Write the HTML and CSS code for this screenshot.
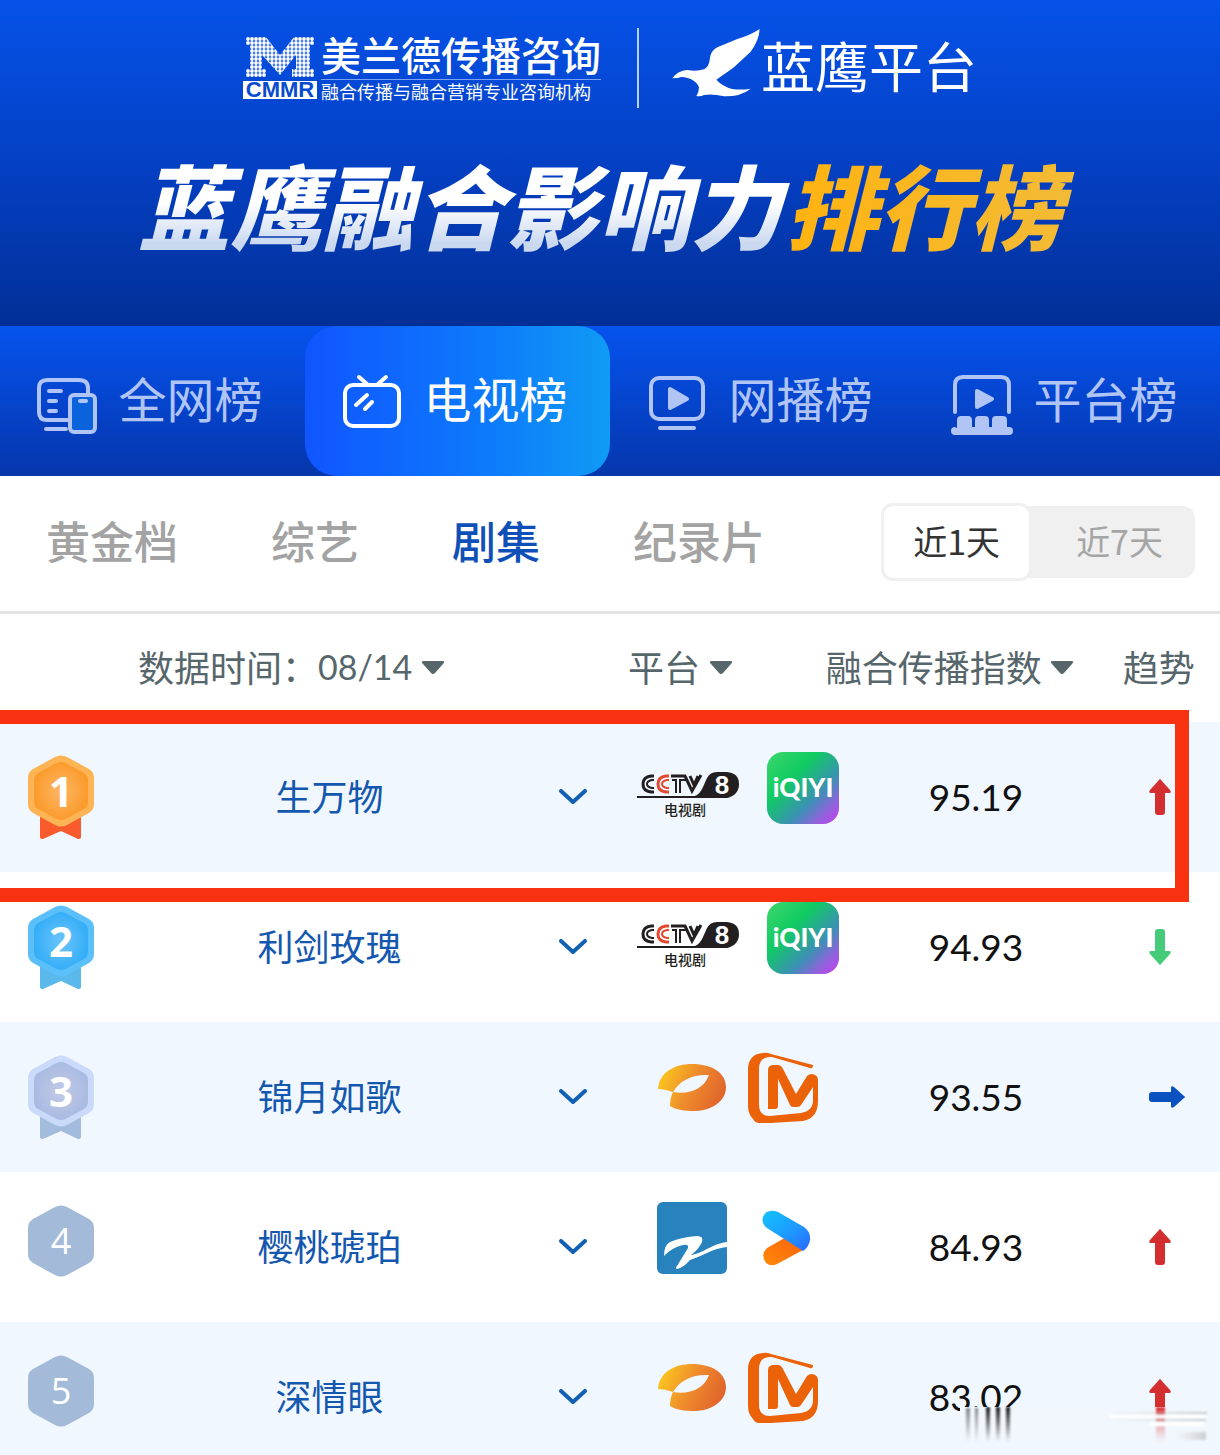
FILE: index.html
```html
<!DOCTYPE html>
<html lang="zh-CN">
<head>
    <meta charset="UTF-8">
    <meta name="viewport" content="width=device-width, initial-scale=1.0">
    <title>蓝鹰融合影响力排行榜</title>
    <link rel="stylesheet" href="styles.css">
</head>
<body>

    <!-- Shared icons -->
    <svg class="sprite" aria-hidden="true">
        <defs>
            <linearGradient id="iqiyiFill" x1="0" y1="0" x2="1" y2="1">
                <stop offset="0" stop-color="#3fd76c"/>
                <stop offset=".35" stop-color="#0fcb62"/>
                <stop offset=".65" stop-color="#3b91b4"/>
                <stop offset=".85" stop-color="#9a5ce0"/>
                <stop offset="1" stop-color="#c23ff2"/>
            </linearGradient>
            <linearGradient id="fishFill" x1="0" y1=".3" x2="1" y2=".6">
                <stop offset="0" stop-color="#fcc81e"/>
                <stop offset=".5" stop-color="#ee8b2d"/>
                <stop offset="1" stop-color="#e0632b"/>
            </linearGradient>
            <linearGradient id="youkuBlue" x1="0" y1="0" x2="1" y2="1">
                <stop offset="0" stop-color="#12c4fb"/>
                <stop offset=".6" stop-color="#1f95ff"/>
                <stop offset="1" stop-color="#2a66ff"/>
            </linearGradient>
            <linearGradient id="youkuOrange" x1="0" y1="1" x2="1" y2="0">
                <stop offset="0" stop-color="#ff8a0a"/>
                <stop offset="1" stop-color="#fa5f0c"/>
            </linearGradient>
            <radialGradient id="goldFill">
                <stop offset="0" stop-color="#fcb765"/>
                <stop offset="1" stop-color="#fb9b2c"/>
            </radialGradient>
            <radialGradient id="blueFill">
                <stop offset="0" stop-color="#6cc4fb"/>
                <stop offset="1" stop-color="#35aef8"/>
            </radialGradient>
            <radialGradient id="greyFill">
                <stop offset="0" stop-color="#c3c9e6"/>
                <stop offset="1" stop-color="#a9bbe2"/>
            </radialGradient>
            <pattern id="dots" width="4" height="4" patternUnits="userSpaceOnUse">
                <circle cx="2" cy="2" r="1.9" fill="#fff"/>
            </pattern>
        </defs>

        <symbol id="hex" viewBox="0 0 66 72">
            <path d="M27 2Q33-1 39 2L61 14Q66 17 66 23V49Q66 55 61 58L39 70Q33 73 27 70L5 58Q0 55 0 49V23Q0 17 5 14Z"/>
        </symbol>
        <symbol id="ribbon" viewBox="0 0 66 84">
            <path d="M12 54H53V82Q53 84 50 84L33 76 15 84Q12 84 12 82Z"/>
        </symbol>
        <symbol id="chevron" viewBox="0 0 28 16">
            <path d="M2 2L14 13 26 2" fill="none" stroke="#1060b4" stroke-width="4" stroke-linecap="round" stroke-linejoin="round"/>
        </symbol>
        <symbol id="caret" viewBox="0 0 24 14">
            <path d="M3 0H21Q25 0 22 3L14 12Q12 14 10 12L2 3Q-1 0 3 0Z" fill="#56666b"/>
        </symbol>
        <symbol id="arrow" viewBox="0 0 22 36">
            <path d="M10 1Q11-1 12 1L21 11Q23 14 20 14H16V33Q16 36 13 36H9Q6 36 6 33V14H2Q-1 14 1 11Z"/>
        </symbol>

        <symbol id="cctv" viewBox="0 0 110 72">
            <g fill="none" stroke="#231f20" stroke-width="2">
                <path d="M17 24H14Q6 25 6 32T14 40H17" stroke-width="3"/>
                <path d="M17 28H15Q10 29 10 32T15 36H17"/>
                <path d="M34 24H49" stroke-width="3"/>
                <path d="M35 28H39V41M43 41V28H49"/>
                <path d="M48 24L55 39 64 23M53 24L57 33 61 24" stroke-width="3"/>
            </g>
            <g fill="none" stroke="#e2492f" stroke-width="2">
                <path d="M32 24H29Q21 25 21 32T29 40H32" stroke-width="3"/>
                <path d="M32 28H30Q25 29 25 32T30 36H32"/>
            </g>
            <path d="M0 44H58Q63 42 66 35L70 26Q73 20 80 20H90Q102 21 102 32T90 46H0Z" fill="#231f20"/>
        </symbol>
        <symbol id="hunan" viewBox="0 0 70 72">
            <path fill="url(#fishFill)" fill-rule="evenodd" d="M1 37C2 20 18 12 35 12C55 12 69 21 69 35C69 49 55 59 37 59C28 59 19 58 13 54Q13 46 16 40Q8 37 1 37ZM16 40C32 43 47 37 52 23C36 22 23 28 16 40Z"/>
        </symbol>
        <symbol id="mango" viewBox="0 0 72 72">
            <path fill="#ec6209" d="M66 13Q66 17 63 16L25 5Q13 4 12 16V53Q12 64 23 64L54 61Q66 59 66 48V35L54 53Q53 55 50 55H46Q44 55 43 53L31 27V54Q31 57 28 57H21V18Q21 13 27 13H31Q34 13 36 17L49 42 60 24Q62 22 65 22Q71 23 71 28V49Q71 66 56 69L24 71H12Q8 71 6 67Q1 62 1 54V16Q2 2 16 1Q19 0 24 2Z"/>
        </symbol>
        <symbol id="zhejiang" viewBox="0 0 70 72">
            <rect width="70" height="72" rx="6" fill="#2782be"/>
            <path fill="#fff" d="M7 54Q7 43 13 40Q25 35 40 34Q47 34 45 40Q42 47 34 53Q41 52 50 47Q61 41 70 40V45Q60 46 50 51Q39 56 33 58Q26 66 20 67Q18 66 20 64L31 46Q32 42 26 43Q14 46 7 54Z"/>
        </symbol>
        <symbol id="youku" viewBox="0 0 72 72">
            <path fill="url(#youkuOrange)" d="M20 46L43 33 56 48 30 62Q24 65 19 61Q13 53 20 46Z"/>
            <path fill="url(#youkuBlue)" d="M31 10L57 25Q64 30 63 38Q62 45 56 49L20 26Q14 21 16 15Q20 6 31 10Z"/>
        </symbol>
    </svg>

    <div class="page">
        <header class="banner">
            <div class="logos">
                <div class="cmmr">
                    <div class="cmmr-mark">
                        <svg width="68" height="40" viewBox="0 0 68 40" aria-hidden="true">
                            <path fill="url(#dots)" d="M0 0H20L34 18 48 0H68V8H64V32H68V40H46V32H50V18L34 38 16 18V32H20V40H0V32H4V8H0Z"/>
                        </svg>
                        <span>CMMR</span>
                    </div>
                    <div class="cmmr-text">
                        <strong>美兰德传播咨询</strong>
                        <small>融合传播与融合营销专业咨询机构</small>
                    </div>
                </div>
                <div class="eagle">
                    <svg width="90" height="70" viewBox="146 38 270 208" aria-hidden="true">
                        <path fill="#fff" d="M150 188Q165 165 195 163Q222 168 245 161Q260 152 262 132Q264 105 285 95L345 70Q385 58 412 40Q410 75 385 108L335 155Q300 180 282 192Q300 212 330 220Q355 224 385 219Q355 243 305 242Q270 234 245 238Q235 243 222 241Q230 230 230 215Q225 200 205 190Q178 180 168 187Q158 187 150 188Z"/>
                    </svg>
                    <span>蓝鹰平台</span>
                </div>
            </div>
            <h1><span class="white">蓝鹰融合影响力</span><span class="gold">排行榜</span></h1>
        </header>

        <nav class="main-tabs">
            <a href="#all">
                <svg width="62" height="62" viewBox="0 0 62 62" fill="none" stroke="currentColor" stroke-width="4" stroke-linecap="round">
                    <path d="M32 46H11Q3 46 3 38V14Q3 6 11 6H43Q52 6 52 14V20M13 17H25M13 27H20M13 37H20M10 55H30"/>
                    <rect x="34" y="21" width="25" height="37" rx="4" fill="#0a62dd"/>
                    <path d="M44 27H50"/>
                </svg>
                全网榜
            </a>
            <a href="#tv" class="active">
                <svg width="62" height="62" viewBox="0 0 62 62" fill="none" stroke="currentColor" stroke-width="4" stroke-linecap="round">
                    <rect x="4" y="11" width="54" height="41" rx="8"/>
                    <path d="M18 3L26 10M45 3L37 10M26 21L15 31M31 28L24 35"/>
                </svg>
                电视榜
            </a>
            <a href="#web">
                <svg width="62" height="62" viewBox="0 0 62 62" fill="none" stroke="currentColor" stroke-width="4" stroke-linecap="round">
                    <rect x="5" y="4" width="52" height="41" rx="8"/>
                    <path d="M24 15V34L41 25Z" fill="currentColor" stroke-linejoin="round"/>
                    <path d="M14 54H48"/>
                </svg>
                网播榜
            </a>
            <a href="#platform">
                <svg width="62" height="62" viewBox="0 0 62 62" fill="none" stroke="currentColor" stroke-width="4" stroke-linecap="round">
                    <path d="M4 38V11Q4 3 12 3H50Q58 3 58 11V38"/>
                    <path d="M26 17V33L41 25Z" fill="currentColor" stroke-linejoin="round"/>
                    <path fill="currentColor" stroke="none" d="M6 54V46Q6 42 10 42H17Q21 42 21 46V53H24V46Q24 42 28 42H34Q38 42 38 46V53H41V46Q41 42 45 42H52Q56 42 56 46V53H58Q62 53 62 57T58 61H4Q0 61 0 57T4 53Z"/>
                </svg>
                平台榜
            </a>
        </nav>

        <div class="sub-tabs">
            <nav>
                <a href="#prime">黄金档</a>
                <a href="#variety">综艺</a>
                <a href="#drama" class="active">剧集</a>
                <a href="#documentary">纪录片</a>
            </nav>
            <div class="range">
                <button type="button" class="active">近1天</button>
                <button type="button">近7天</button>
            </div>
        </div>

        <div class="ranking">
            <table>
                <colgroup>
                    <col class="col-rank">
                    <col class="col-name">
                    <col class="col-more">
                    <col class="col-platform">
                    <col class="col-index">
                    <col class="col-trend">
                </colgroup>
                <thead>
                    <tr>
                        <th colspan="3" class="head-date">
                            <div class="filter">
                                <label for="date">数据时间：</label>
                                <select id="date"><option>08/14</option></select>
                                <svg width="24" height="14"><use href="#caret"/></svg>
                            </div>
                        </th>
                        <th class="head-platform">
                            <div class="filter">
                                <select id="platform" aria-label="平台"><option>平台</option></select>
                                <svg width="24" height="14"><use href="#caret"/></svg>
                            </div>
                        </th>
                        <th class="head-index">
                            <div class="filter">
                                <button type="button">融合传播指数<svg width="24" height="14"><use href="#caret"/></svg></button>
                            </div>
                        </th>
                        <th class="head-trend">趋势</th>
                    </tr>
                </thead>
                <tbody>
                    <tr>
                        <td>
                            <div class="medal gold-medal">
                                <svg class="tail"><use href="#ribbon"/></svg>
                                <svg class="edge"><use href="#hex"/></svg>
                                <svg class="face" fill="url(#goldFill)"><use href="#hex"/></svg>
                                <span>1</span>
                            </div>
                        </td>
                        <td class="name">生万物</td>
                        <td><button type="button" class="more" aria-label="展开"><svg width="28" height="16"><use href="#chevron"/></svg></button></td>
                        <td>
                            <div class="platforms">
                                <svg width="110" height="72" viewBox="0 0 110 72">
                                    <use href="#cctv"/>
                                    <text x="85" y="42" class="cctv-number">8</text>
                                    <text x="48" y="63" class="cctv-name">电视剧</text>
                                </svg>
                                <svg width="72" height="72" viewBox="0 0 72 72">
                                    <rect width="72" height="72" rx="16" fill="url(#iqiyiFill)"/>
                                    <text x="36" y="45" class="iqiyi-name">iQIYI</text>
                                </svg>
                            </div>
                        </td>
                        <td class="index">95.19</td>
                        <td class="trend"><svg width="22" height="36" class="up"><use href="#arrow"/></svg></td>
                    </tr>
                    <tr>
                        <td>
                            <div class="medal blue-medal">
                                <svg class="tail"><use href="#ribbon"/></svg>
                                <svg class="edge"><use href="#hex"/></svg>
                                <svg class="face" fill="url(#blueFill)"><use href="#hex"/></svg>
                                <span>2</span>
                            </div>
                        </td>
                        <td class="name">利剑玫瑰</td>
                        <td><button type="button" class="more" aria-label="展开"><svg width="28" height="16"><use href="#chevron"/></svg></button></td>
                        <td>
                            <div class="platforms">
                                <svg width="110" height="72" viewBox="0 0 110 72">
                                    <use href="#cctv"/>
                                    <text x="85" y="42" class="cctv-number">8</text>
                                    <text x="48" y="63" class="cctv-name">电视剧</text>
                                </svg>
                                <svg width="72" height="72" viewBox="0 0 72 72">
                                    <rect width="72" height="72" rx="16" fill="url(#iqiyiFill)"/>
                                    <text x="36" y="45" class="iqiyi-name">iQIYI</text>
                                </svg>
                            </div>
                        </td>
                        <td class="index">94.93</td>
                        <td class="trend"><svg width="22" height="36" class="down"><use href="#arrow"/></svg></td>
                    </tr>
                    <tr>
                        <td>
                            <div class="medal grey-medal">
                                <svg class="tail"><use href="#ribbon"/></svg>
                                <svg class="edge"><use href="#hex"/></svg>
                                <svg class="face" fill="url(#greyFill)"><use href="#hex"/></svg>
                                <span>3</span>
                            </div>
                        </td>
                        <td class="name">锦月如歌</td>
                        <td><button type="button" class="more" aria-label="展开"><svg width="28" height="16"><use href="#chevron"/></svg></button></td>
                        <td>
                            <div class="platforms">
                                <svg width="70" height="72"><use href="#hunan"/></svg>
                                <svg width="72" height="72"><use href="#mango"/></svg>
                            </div>
                        </td>
                        <td class="index">93.55</td>
                        <td class="trend"><svg width="36" height="22" viewBox="0 0 36 22" class="flat"><use href="#arrow" width="22" height="36" transform="translate(36 0) rotate(90)"/></svg></td>
                    </tr>
                    <tr>
                        <td>
                            <div class="medal plain">
                                <svg class="edge"><use href="#hex"/></svg>
                                <span>4</span>
                            </div>
                        </td>
                        <td class="name">樱桃琥珀</td>
                        <td><button type="button" class="more" aria-label="展开"><svg width="28" height="16"><use href="#chevron"/></svg></button></td>
                        <td>
                            <div class="platforms">
                                <svg width="70" height="72"><use href="#zhejiang"/></svg>
                                <svg width="72" height="72"><use href="#youku"/></svg>
                            </div>
                        </td>
                        <td class="index">84.93</td>
                        <td class="trend"><svg width="22" height="36" class="up"><use href="#arrow"/></svg></td>
                    </tr>
                    <tr>
                        <td>
                            <div class="medal plain">
                                <svg class="edge"><use href="#hex"/></svg>
                                <span>5</span>
                            </div>
                        </td>
                        <td class="name">深情眼</td>
                        <td><button type="button" class="more" aria-label="展开"><svg width="28" height="16"><use href="#chevron"/></svg></button></td>
                        <td>
                            <div class="platforms">
                                <svg width="70" height="72"><use href="#hunan"/></svg>
                                <svg width="72" height="72"><use href="#mango"/></svg>
                            </div>
                        </td>
                        <td class="index">83.02</td>
                        <td class="trend last">
                            <svg width="22" height="36" class="up"><use href="#arrow"/></svg>
                            <!-- Smeared corner -->
                            <svg class="smear" width="250" height="38" viewBox="0 0 250 38" aria-hidden="true">
                                <defs>
                                    <linearGradient id="inkFade" x1="0" y1="0" x2="0" y2="1">
                                        <stop offset="0" stop-color="#111"/>
                                        <stop offset=".5" stop-color="#555" stop-opacity=".7"/>
                                        <stop offset="1" stop-color="#777" stop-opacity="0"/>
                                    </linearGradient>
                                    <linearGradient id="redFade" x1="0" y1="0" x2="0" y2="1">
                                        <stop offset="0" stop-color="#d8292c"/>
                                        <stop offset="1" stop-color="#e88a90" stop-opacity="0"/>
                                    </linearGradient>
                                    <linearGradient id="greyFade">
                                        <stop offset="0" stop-color="#bbb" stop-opacity="0"/>
                                        <stop offset="1" stop-color="#aaa"/>
                                    </linearGradient>
                                    <filter id="soft">
                                        <feGaussianBlur stdDeviation="1"/>
                                    </filter>
                                </defs>
                                <rect width="250" height="38" fill="#f1f7fd"/>
                                <g filter="url(#soft)">
                                    <path fill="url(#inkFade)" opacity=".5" d="M6 1H10V35H6ZM15 1H18V35H15Z"/>
                                    <path fill="url(#inkFade)" d="M26 0H30V35H26ZM36 0H40V35H36ZM46 0H50V35H46Z"/>
                                    <path fill="url(#redFade)" d="M196 0H205V35H196Z"/>
                                    <path fill="#fff" d="M150 8H246V11H150ZM190 15H244V19H190Z"/>
                                    <path fill="url(#greyFade)" opacity=".6" d="M150 5H247V7H150ZM150 12H246V14H150Z"/>
                                    <path fill="url(#greyFade)" opacity=".5" d="M216 25H246V33H216Z"/>
                                </g>
                            </svg>
                        </td>
                    </tr>
                </tbody>
            </table>
            <div class="highlight"></div>
        </div>
    </div>

</body>
</html>
```
FILE: styles.css
```css
* {
    margin: 0;
    padding: 0;
    box-sizing: border-box;
}

body {
    background: #fff;
    font-family: "Noto Sans CJK SC", sans-serif;
    color: #222;
}

a {
    text-decoration: none;
}

button,
select {
    font: inherit;
    color: inherit;
    background: none;
    border: none;
    appearance: none;
    cursor: pointer;
}

svg {
    display: block;
    flex-shrink: 0;
}

.sprite {
    position: absolute;
    width: 0;
    height: 0;
}

.page {
    height: 100vh;
    overflow: hidden;
}

/* Banner */
.banner {
    padding: 28px 0 66px;
    background: linear-gradient(#0552e8, #0440c4 50%, #022f96);
    color: #fff;
}

.logos {
    display: flex;
    justify-content: center;
    height: 80px;
}

.cmmr {
    display: flex;
    align-items: center;
    gap: 4px;
    padding-right: 36px;
    border-right: 2px solid #b8d0fa;
}

.cmmr-mark {
    display: flex;
    flex-direction: column;
    align-items: center;
    gap: 4px;
    width: 74px;
}

.cmmr-mark span {
    width: 100%;
    background: #fff;
    color: #0a4bd0;
    font: bold 22px/18px "Liberation Sans", sans-serif;
    text-align: center;
}

.cmmr-text {
    display: flex;
    flex-direction: column;
}

.cmmr-text strong {
    padding-bottom: 6px;
    font-size: 40px;
    font-weight: 500;
    line-height: 38px;
    border-bottom: 1px solid #7aa2f3;
}

.cmmr-text small {
    font-size: 18px;
    line-height: 22px;
}

.eagle {
    display: flex;
    align-items: flex-start;
    padding-left: 32px;
}

.eagle span {
    font-size: 54px;
    line-height: 74px;
}

h1 {
    display: flex;
    justify-content: center;
    margin-top: 38px;
    font-size: 92px;
    font-weight: 900;
    font-style: italic;
    line-height: 114px;
}

h1 span {
    padding-right: 20px;
    -webkit-background-clip: text;
    background-clip: text;
    color: transparent;
}

h1 .white {
    margin-right: -16px;
    background-image: linear-gradient(#fff 50%, #cbd9f0 85%);
}

h1 .gold {
    background-image: linear-gradient(90deg, #ffb310, #f3bb38);
}

/* Main tabs */
.main-tabs {
    display: flex;
    background: linear-gradient(#0553ee, #0536ac);
}

.main-tabs a {
    flex: 1;
    display: flex;
    align-items: center;
    justify-content: center;
    gap: 20px;
    height: 150px;
    padding: 0 6px 8px 0;
    color: #b0c4f6;
    font-size: 48px;
}

.main-tabs svg {
    margin-top: 16px;
}

.main-tabs .active {
    background: linear-gradient(90deg, #1055ff, #0d7afb 60%, #109bf5);
    border-radius: 32px;
    color: #fff;
}

/* Sub tabs */
.sub-tabs {
    display: flex;
    align-items: center;
    justify-content: space-between;
    height: 138px;
    padding: 0 25px 3px 46px;
    border-bottom: 3px solid #e4e4e4;
}

.sub-tabs nav {
    display: flex;
    gap: 93px;
    padding-bottom: 4px;
    font-size: 44px;
    font-weight: 500;
}

.sub-tabs nav a {
    color: #a3a3a3;
}

.sub-tabs nav .active {
    color: #0f50b8;
}

.range {
    display: flex;
    align-items: center;
    font-size: 34px;
    line-height: 70px;
}

.range button {
    margin-left: -12px;
    padding: 0 32px 2px 56px;
    background: #f0f0f0;
    border-radius: 0 12px 12px 0;
    color: #a5a5a5;
}

.range .active {
    z-index: 1;
    margin-left: 0;
    padding: 0 29px 2px;
    background: #fff;
    border: 3px solid #f0f0f0;
    border-radius: 12px;
    color: #333;
}

/* Ranking table */
.ranking {
    position: relative;
}

table {
    width: 100%;
    border-collapse: collapse;
    table-layout: fixed;
}

.col-rank {
    width: 10%;
}

.col-name {
    width: 34%;
}

.col-more {
    width: 6%;
}

.col-platform {
    width: 21%;
}

.col-index {
    width: 18%;
}

.col-trend {
    width: 11%;
}

th {
    height: 108px;
    padding-bottom: 4px;
    color: #56666b;
    font-size: 36px;
    font-weight: normal;
    text-align: left;
    white-space: nowrap;
}

.filter,
.filter button {
    display: flex;
    align-items: center;
}

.filter svg {
    margin: 4px 0 0 8px;
}

.head-date {
    padding-left: 138px;
}

.head-date select {
    font-family: Lato, sans-serif;
    font-size: 34px;
}

.head-platform {
    padding-left: 18px;
}

.head-index .filter {
    justify-content: flex-end;
    padding-right: 12px;
}

.head-trend {
    padding-left: 37px;
}

td {
    height: 150px;
    text-align: center;
    vertical-align: middle;
}

tbody tr:nth-child(odd) {
    background: #f0f7fe;
}

.name {
    padding-bottom: 5px;
    color: #1457ae;
    font-size: 36px;
}

.more {
    display: block;
    margin: 0 auto;
}

.platforms {
    display: flex;
    justify-content: center;
    gap: 20px;
    margin-bottom: 18px;
}

.cctv-number {
    fill: #fff;
    font: bold 26px "Liberation Sans", sans-serif;
    text-anchor: middle;
}

.cctv-name {
    fill: #231f20;
    font: 500 14px "Noto Sans CJK SC", sans-serif;
    text-anchor: middle;
}

.iqiyi-name {
    fill: #fff;
    font: 900 26px Lato, sans-serif;
    text-anchor: middle;
}

.index {
    padding-bottom: 2px;
    color: #111;
    font-family: Lato, sans-serif;
    font-size: 37px;
}

.trend {
    padding-left: 63px;
}

.up {
    fill: #d32f31;
}

.down {
    fill: #46cb7b;
    transform: rotate(180deg);
}

.flat {
    fill: #0b52c0;
}

/* Rank medals: layers share one grid cell */
.medal {
    display: grid;
    justify-content: center;
    grid-template-columns: 66px;
    grid-template-rows: 72px 12px;
    color: #fff;
}

.medal > * {
    grid-area: 1 / 1;
    place-self: center;
}

.medal .tail {
    grid-row: 1 / 3;
    width: 66px;
    height: 84px;
}

.medal .edge {
    width: 66px;
    height: 72px;
}

.medal .face {
    width: 54px;
    height: 60px;
}

.medal span {
    z-index: 1;
    font: bold 42px/72px "Open Sans", sans-serif;
}

.medal.plain span {
    font-size: 36px;
    font-weight: normal;
}

.gold-medal .tail {
    fill: #fa5b2c;
}

.gold-medal .edge {
    fill: #fdb455;
}

.blue-medal .tail {
    fill: #5bb8ea;
}

.blue-medal .edge {
    fill: #5bc0fa;
}

.grey-medal .tail {
    fill: #a3bbdc;
}

.grey-medal .edge {
    fill: #c9dafa;
}

.plain .edge {
    fill: #a3bad8;
}

/* Red frame around the first place */
.highlight {
    position: absolute;
    top: 96px;
    left: 0;
    right: 31px;
    height: 192px;
    border: 14px solid #f83210;
    border-left: none;
    pointer-events: none;
}

.last {
    position: relative;
}

.smear {
    position: absolute;
    top: 85px;
    right: 10px;
}
```
